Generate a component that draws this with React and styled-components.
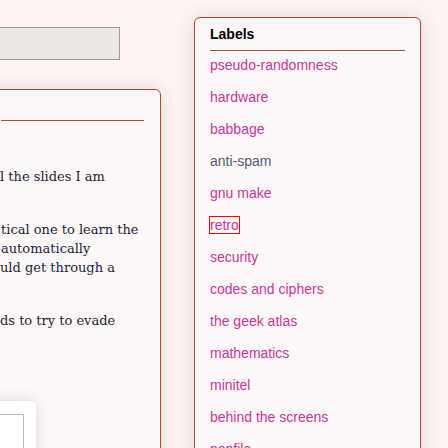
import React from "react";
import styled, { createGlobalStyle } from "styled-components";

const Global = createGlobalStyle`
  html, body {
    margin: 0;
    padding: 0;
    background: #fcf5f4;
    overflow: hidden;
  }
  body {
    font-family: "Liberation Sans", Arial, sans-serif;
  }
`;

const Page = styled.div`
  display: flex;
  align-items: flex-start;
  gap: 33px;
  width: 448px;
  height: 448px;
  overflow: hidden;
`;

const Main = styled.div`
  display: flex;
  flex-direction: column;
  width: 161px;
  flex-shrink: 0;
  padding-top: 27px;
`;

const Search = styled.div`
  width: 140px;
  height: 31px;
  margin-left: -22px;
  background: #ebe8e5;
  border: 1px solid #9a9a9a;
`;

const Post = styled.div`
  margin-top: 29px;
  margin-left: -30px;
  padding: 0 16px 20px 30px;
  background: #fff8f8;
  border: 1px solid #a0522d;
  border-radius: 0 6px 6px 0;
  box-shadow: 0 0 18px rgba(120, 80, 70, 0.18);
  height: 360px;
  position: relative;
`;

const Rule = styled.div`
  height: 1px;
  background: #a0522d;
  margin-top: ${(p) => p.$top || 0}px;
`;

const Body = styled.div`
  font-family: "DejaVu Serif", Georgia, serif;
  font-size: 13px;
  line-height: 19px;
  color: #1b1d3a;
  padding-top: 46px;
  white-space: nowrap;
`;

const Para = styled.p`
  margin: 0 0 34px 0;
`;

const Line = styled.span`
  display: block;
  margin-left: ${(p) => p.$shift || 0}px;
`;

const Widget = styled.div`
  position: absolute;
  left: 0;
  top: 311px;
  width: 65px;
  height: 60px;
  background: #fff;
  border-radius: 0 5px 0 0;
  box-shadow: 0 0 16px rgba(0, 0, 0, 0.14);
`;

const WidgetInner = styled.div`
  margin-top: 13px;
  width: 52px;
  height: 60px;
  border: 1px solid #bdbdbd;
  border-left: none;
`;

const Side = styled.aside`
  margin-top: 17px;
  width: 195px;
  flex-shrink: 0;
  padding: 0 15px;
  height: 460px;
  background: #fff8f8;
  border: 1px solid #a0522d;
  border-radius: 6px 6px 0 0;
  box-shadow: 0 0 18px rgba(120, 80, 70, 0.18);
`;

const Title = styled.h2`
  margin: 0;
  padding-top: 8px;
  font-size: 14px;
  line-height: 16px;
  font-weight: bold;
  color: #000;
  padding-bottom: 8px;
`;

const List = styled.ul`
  list-style: none;
  margin: 0;
  padding: 0;
`;

const Item = styled.li`
  font-size: 14px;
  line-height: 16px;
  padding: 6px 0 10px;
`;

const Label = styled.a`
  color: ${(p) => (p.$muted ? "#4f5b6e" : "#c8369c")};
  text-decoration: none;
  outline: ${(p) => (p.$focus ? "1px solid #ff0000" : "none")};
`;

const labels = [
  "pseudo-randomness",
  "hardware",
  "babbage",
  "anti-spam",
  "gnu make",
  "retro",
  "security",
  "codes and ciphers",
  "the geek atlas",
  "mathematics",
  "minitel",
  "behind the screens",
  "popfile",
];

export default function App() {
  return (
    <>
      <Global />
      <Page>
        <Main>
          <Search />
          <Post>
            <Rule $top={30} />
            <Body>
              <Para>
                <Line $shift={-1}>l the slides I am</Line>
              </Para>
              <Para>
                <Line>tical one to learn the</Line>
                <Line>automatically</Line>
                <Line $shift={-1}>uld get through a</Line>
              </Para>
              <Para>
                <Line $shift={-1}>ds to try to evade</Line>
              </Para>
            </Body>
            <Widget>
              <WidgetInner />
            </Widget>
          </Post>
        </Main>
        <Side>
          <Title>Labels</Title>
          <Rule />
          <List>
            {labels.map((l) => (
              <Item key={l}>
                <Label href="#" $muted={l === "anti-spam"} $focus={l === "retro"}>
                  {l}
                </Label>
              </Item>
            ))}
          </List>
        </Side>
      </Page>
    </>
  );
}
